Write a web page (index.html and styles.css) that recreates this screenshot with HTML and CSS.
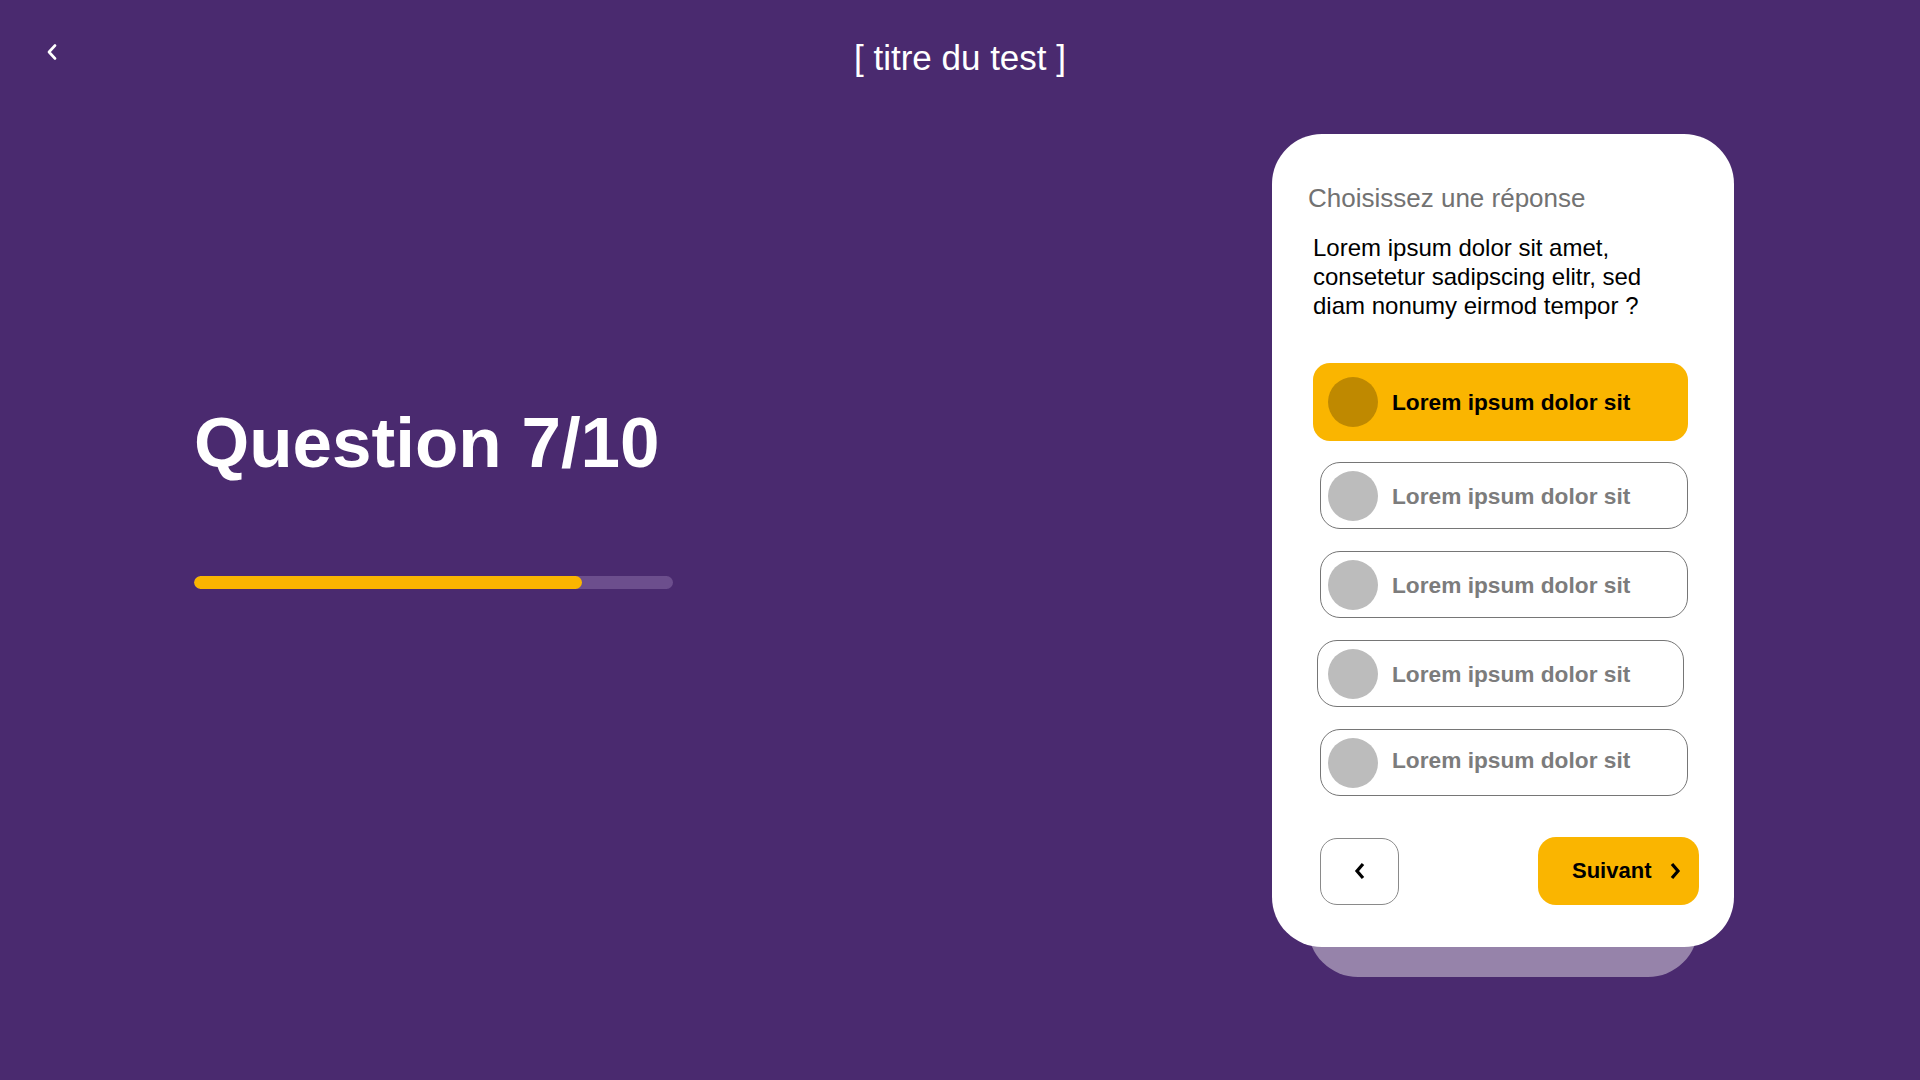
FILE: index.html
```html
<!DOCTYPE html>
<html lang="fr">
<head>
<meta charset="utf-8">
<title>Question 7/10</title>
<link rel="stylesheet" href="styles.css">
</head>
<body>
<header class="topbar">
  <div class="topbar-left">
    <button class="back-link" aria-label="Retour">
      <svg width="10" height="16" viewBox="0 0 10 16"><polyline points="8,1.5 2,8 8,14.5" fill="none" stroke="#fff" stroke-width="2.6" stroke-linejoin="round" stroke-linecap="round"/></svg>
    </button>
  </div>
  <h1 class="test-title">[ titre du test ]</h1>
  <div></div>
</header>
<main class="main">
  <section class="intro">
    <h2 class="q-number">Question 7/10</h2>
    <div class="progress"><div class="progress-fill" style="width:388px"></div></div>
  </section>
  <section class="card">
    <p class="card-label">Choisissez une réponse</p>
    <p class="card-question">Lorem ipsum dolor sit amet, consetetur sadipscing elitr, sed diam nonumy eirmod tempor ?</p>
    <div class="options">
      <div class="option option-selected"><span class="dot"></span><span class="opt-text">Lorem ipsum dolor sit</span></div>
      <div class="option"><span class="dot"></span><span class="opt-text">Lorem ipsum dolor sit</span></div>
      <div class="option"><span class="dot"></span><span class="opt-text">Lorem ipsum dolor sit</span></div>
      <div class="option option-shift"><span class="dot"></span><span class="opt-text">Lorem ipsum dolor sit</span></div>
      <div class="option option-last"><span class="dot"></span><span class="opt-text">Lorem ipsum dolor sit</span></div>
    </div>
    <div class="actions">
      <button class="btn-prev" aria-label="Précédent">
        <svg width="12" height="18" viewBox="0 0 12 18"><polyline points="9,2 3,9 9,16" fill="none" stroke="#000" stroke-width="3.2"/></svg>
      </button>
      <button class="btn-next"><span>Suivant</span>
        <svg width="12" height="18" viewBox="0 0 12 18"><polyline points="3,2 9,9 3,16" fill="none" stroke="#000" stroke-width="3.2"/></svg>
      </button>
    </div>
  </section>
</main>
</body>
</html>
```
FILE: styles.css
```css
* { box-sizing: border-box; }
html, body {
  margin: 0;
  padding: 0;
}
body {
  background: #4a2a6f;
  width: 1920px;
  height: 1080px;
  overflow: hidden;
  font-family: "Liberation Sans", Arial, Helvetica, sans-serif;
  color: #fff;
}
button {
  font-family: inherit;
  cursor: pointer;
}

.topbar {
  display: grid;
  grid-template-columns: 1fr auto 1fr;
  align-items: start;
  padding-top: 38px;
}
.topbar-left {
  padding-left: 47px;
}
.back-link {
  background: none;
  border: 0;
  padding: 0;
  margin-top: 6px;
  display: block;
  line-height: 0;
}
.test-title {
  margin: 0;
  font-size: 35px;
  line-height: 40px;
  font-weight: 400;
  color: #fff;
}

.main {
  display: flex;
  align-items: flex-start;
  padding: 56px 186px 0 194px;
}
.intro {
  flex: none;
  margin-top: 269px;
}
.q-number {
  margin: 0;
  font-size: 71px;
  line-height: 80px;
  font-weight: 700;
  color: #fff;
}
.progress {
  margin-top: 93px;
  width: 479px;
  height: 13px;
  border-radius: 7px;
  background: #6c4e8d;
  overflow: hidden;
}
.progress-fill {
  height: 100%;
  border-radius: 7px;
  background: #fab500;
}

.card {
  position: relative;
  margin-left: auto;
  width: 462px;
  background: #fff;
  border-radius: 50px;
  padding: 49px 35px 42px 36px;
  color: #000;
}
.card::before {
  content: "";
  position: absolute;
  left: 36px;
  right: 36px;
  bottom: -30px;
  height: 120px;
  border-radius: 0 0 50px 50px;
  background: #9683aa;
  z-index: -1;
}
.card-label {
  margin: 0;
  font-size: 26px;
  line-height: 30px;
  color: #727272;
}
.card-question {
  margin: 20px 0 0 5px;
  width: 350px;
  font-size: 24px;
  line-height: 29px;
  color: #000;
}

.options {
  margin: 43px 0 0 5px;
  width: 375px;
  display: flex;
  flex-direction: column;
  gap: 22px;
}
.option {
  display: flex;
  align-items: center;
  gap: 14px;
  margin-left: 7px;
  width: 368px;
  height: 67px;
  padding-left: 7px;
  border: 1px solid #767676;
  border-radius: 20px;
  background: #fff;
}
.option-shift {
  margin-left: 4px;
  width: 367px;
  padding-left: 10px;
}
.dot {
  flex: none;
  width: 50px;
  height: 50px;
  border-radius: 50%;
  background: #bcbcbc;
}
.opt-text {
  font-size: 22.7px;
  font-weight: 700;
  color: #7c7c7c;
  padding-top: 2px;
}
.option-last .opt-text {
  padding-top: 0;
  padding-bottom: 4px;
}
.option-selected {
  margin-left: 0;
  margin-bottom: -1px;
  width: 375px;
  height: 78px;
  padding-left: 15px;
  border: 0;
  border-radius: 17px;
  background: #fab500;
}
.option-selected .dot {
  background: #bf8900;
}
.option-selected .opt-text {
  color: #000;
  padding-top: 0;
}

.actions {
  margin: 41px 0 0 12px;
  display: flex;
  justify-content: space-between;
  align-items: center;
}
.btn-prev {
  width: 79px;
  height: 67px;
  border: 1px solid #8a8a8a;
  border-radius: 17px;
  background: #fff;
  display: flex;
  align-items: center;
  justify-content: center;
  padding: 0;
}
.btn-next {
  width: 161px;
  height: 68px;
  border: 0;
  border-radius: 18px;
  background: #fab500;
  display: flex;
  align-items: center;
  padding: 0 0 0 34px;
  gap: 18px;
  font-size: 22px;
  font-weight: 700;
  color: #000;
}
```
